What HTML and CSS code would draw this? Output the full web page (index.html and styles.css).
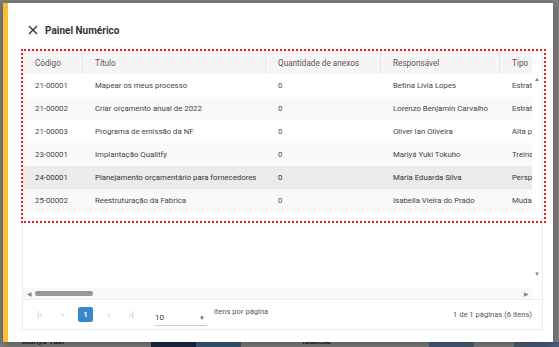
FILE: index.html
```html
<!DOCTYPE html>
<html lang="pt-BR">
<head>
  <meta charset="UTF-8" />
  <title>Painel Numérico</title>
  <link rel="stylesheet" href="styles.css">
</head>
<body>

  <div class="dialog">
    <header class="dialog-head">
      <svg class="close" width="10" height="10" viewBox="0 0 10 10">
        <path d="M1 1 L9 9 M9 1 L1 9" stroke="#333" stroke-width="1.4" fill="none" />
      </svg>
      <h1>Painel Numérico</h1>
    </header>

    <div class="grid">
      <div class="grid-body">
        <div class="grid-main">
          <div class="row head">
            <div class="c c1">Código</div>
            <div class="c c2">Título</div>
            <div class="c c3">Quantidade de anexos</div>
            <div class="c c4">Responsável</div>
            <div class="c c5">Tipo</div>
          </div>
          <div class="row">
            <div class="c c1">21-00001</div>
            <div class="c c2">Mapear os meus processo</div>
            <div class="c c3">0</div>
            <div class="c c4">Betina Lívia Lopes</div>
            <div class="c c5">Estratégico</div>
          </div>
          <div class="row alt">
            <div class="c c1">21-00002</div>
            <div class="c c2">Criar orçamento anual de 2022</div>
            <div class="c c3">0</div>
            <div class="c c4">Lorenzo Benjamin Carvalho</div>
            <div class="c c5">Estratégico</div>
          </div>
          <div class="row">
            <div class="c c1">21-00003</div>
            <div class="c c2">Programa de emissão da NF</div>
            <div class="c c3">0</div>
            <div class="c c4">Oliver Ian Oliveira</div>
            <div class="c c5">Alta performance</div>
          </div>
          <div class="row alt">
            <div class="c c1">23-00001</div>
            <div class="c c2">Implantação Qualitfy</div>
            <div class="c c3">0</div>
            <div class="c c4">Mariyá Yuki Tokuho</div>
            <div class="c c5">Treinamento</div>
          </div>
          <div class="row hover">
            <div class="c c1">24-00001</div>
            <div class="c c2">Planejamento orçamentário para fornecedores</div>
            <div class="c c3">0</div>
            <div class="c c4">Maria Eduarda Silva</div>
            <div class="c c5">Perspectiva</div>
          </div>
          <div class="row alt">
            <div class="c c1">25-00002</div>
            <div class="c c2">Reestruturação da Fabrica</div>
            <div class="c c3">0</div>
            <div class="c c4">Isabella Vieira do Prado</div>
            <div class="c c5">Mudança</div>
          </div>
        </div>
        <div class="vscroll">
          <span class="arr">&#9650;</span>
          <span class="arr">&#9660;</span>
        </div>
      </div>
      <div class="hscroll">
        <span class="arr">&#9664;</span>
        <span class="thumb"></span>
        <span class="arr right">&#9654;</span>
      </div>
      <div class="pager">
        <span class="pbtn">|&lsaquo;</span>
        <span class="pbtn">&lsaquo;</span>
        <span class="pbtn current">1</span>
        <span class="pbtn">&rsaquo;</span>
        <span class="pbtn">&rsaquo;|</span>
        <div class="size">
          <span>10</span>
          <span class="caret">&#9660;</span>
        </div>
        <span class="per">itens por página</span>
        <span class="info">1 de 1 páginas (6 itens)</span>
      </div>
      <div class="focus-box"></div>
    </div>
  </div>

  <div class="behind">
    <span class="b-name">Mariyá Yuki T</span>
    <span class="b-block dark"></span>
    <span class="b-name">Isabella Vieir</span>
    <span class="b-block"></span>
    <span class="b-block"></span>
  </div>

</body>
</html>
```

FILE: styles.css
```css
body {
  margin: 0;
  background: #7f7f7f;
  font-family: Roboto, "Liberation Sans", sans-serif;
  color: #444;
  overflow: hidden;
}

.dialog {
  margin: 3px 0 0 3px;
  width: 550px;
  height: 339px;
  background: #fff;
  border-left: 5px solid #fbc02d;
  box-shadow: 0 2px 10px rgba(0, 0, 0, 0.35);
  padding: 0 10px 0 14px;
  box-sizing: border-box;
  position: relative;
}

.dialog-head {
  display: flex;
  align-items: center;
  height: 45px;
  padding-left: 6px;
  padding-top: 9px;
  box-sizing: border-box;
}

.dialog-head h1 {
  margin: 0 0 0 7px;
  font-size: 10px;
  font-weight: 700;
  color: #333;
}

.grid {
  border: 1px solid #ececec;
  margin-top: 2px;
  position: relative;
}

.grid-body {
  display: flex;
  height: 237px;
}

.grid-main {
  flex: 1;
  overflow: hidden;
}

.row {
  display: flex;
  height: 23px;
  align-items: center;
  font-size: 7.8px;
  white-space: nowrap;
}

.row.head {
  background: #f5f5f5;
  color: #555;
  font-size: 8.2px;
}

.row.head .c {
  border-right: 1px solid #e6e6e6;
}

.row.alt { background: #f9f9f9; }
.row.hover { background: #ebebeb; color: #333; }

.c {
  padding: 0 12px;
  height: 100%;
  display: flex;
  align-items: center;
  box-sizing: border-box;
  flex-shrink: 0;
  overflow: hidden;
}

.c1 { width: 60px; }
.c2 { width: 183px; }
.c3 { width: 115px; }
.c4 { width: 119px; }
.c5 { width: 80px; }

.vscroll {
  width: 10px;
  display: flex;
  flex-direction: column;
  justify-content: space-between;
  padding: 24px 0 10px;
  background: #fff;
}

.arr {
  font-size: 6px;
  color: #888;
  line-height: 8px;
  text-align: center;
}

.hscroll {
  display: flex;
  align-items: center;
  height: 11px;
  background: #f8f8f8;
  padding: 0 3px 0 4px;
  margin-right: 10px;
}

.hscroll .thumb {
  width: 58px;
  height: 5px;
  border-radius: 3px;
  background: #999;
  margin-left: 3px;
}

.hscroll .right {
  margin-left: auto;
}

.pager {
  display: flex;
  align-items: center;
  height: 29px;
  border-top: 1px solid #eee;
  padding-left: 9px;
  font-size: 7.6px;
  color: #555;
}

.pbtn {
  width: 15px;
  height: 15px;
  margin-right: 8px;
  display: flex;
  align-items: center;
  justify-content: center;
  color: #c4c4c4;
  font-size: 9px;
  border-radius: 2px;
}

.pbtn.current {
  background: #3a87c9;
  color: #fff;
  font-size: 8px;
  font-weight: 700;
}

.size {
  display: flex;
  justify-content: space-between;
  align-items: center;
  width: 52px;
  height: 16px;
  margin: 6px 0 0 8px;
  border-bottom: 1px solid #ccc;
  font-size: 8px;
  color: #333;
}

.size .caret {
  font-size: 6px;
  color: #666;
  margin-right: 2px;
}

.per {
  margin: -6px 0 0 7px;
}

.info {
  margin-left: auto;
  margin-right: 10px;
}

.focus-box {
  position: absolute;
  left: -2px;
  top: -2px;
  width: 521px;
  height: 170px;
  border: 2px dotted #ee1c25;
}

.behind {
  display: flex;
  align-items: center;
  height: 8px;
  padding-left: 22px;
  font-size: 8px;
  font-weight: 700;
  color: #222;
}

.b-block {
  width: 50px;
  height: 8px;
  background: #4a5e78;
  margin-left: 40px;
}

.b-block.dark {
  width: 100px;
  margin: 0 62px 0 22px;
  background: linear-gradient(90deg, #1d2a45 50%, #3c5a78 50%);
}

.b-name + .b-block {
  margin-left: 85px;
}
```
